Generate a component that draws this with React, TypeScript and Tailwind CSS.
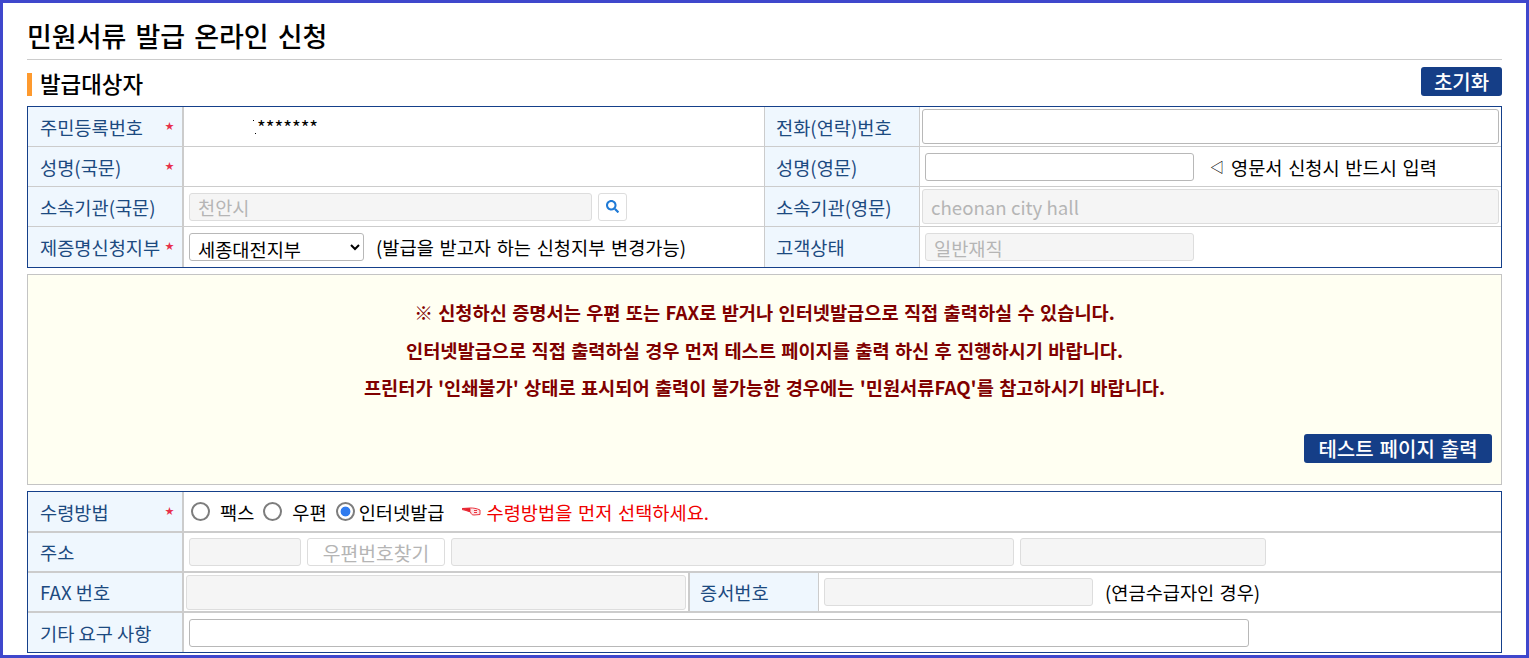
import { ReactNode } from 'react'
import { FaSearch } from 'react-icons/fa'

const fieldBase = 'h-[28px] rounded-[3px] border px-2 text-[18.67px] outline-none'
const disabledField = `${fieldBase} border-[#dddddd] bg-[#f5f5f5] text-[#b5b5b5]`
const enabledField = `${fieldBase} border-[#b8b8b8] bg-white text-black`
const radioClass =
  "m-0 h-[19px] w-[19px] appearance-none rounded-full border-2 border-[#7d7d7d] bg-white checked:bg-[radial-gradient(circle,#2f7bef_0,#2f7bef_42%,white_50%)]"

function Required() {
  return <span className="absolute right-[8px] top-[11px] text-[9px] leading-[16px] text-[#e8304a]">★</span>
}

function Label({ children, required, className }: { children: ReactNode; required?: boolean; className: string }) {
  return (
    <div className={`relative flex shrink-0 items-center bg-[#eff7fe] text-[#1c4a80] ${className}`}>
      <span>{children}</span>
      {required && <Required />}
    </div>
  )
}

function Row({ children, className = 'h-[40px] border-b border-[#cccccc]' }: { children: ReactNode; className?: string }) {
  return <div className={`flex ${className}`}>{children}</div>
}

function ApplicantTable() {
  const left = 'w-[156px] border-r-2 border-[#cccccc] pl-[12px]'
  const right = 'w-[156px] border-x border-[#cccccc] pl-[11px]'
  return (
    <div className="border border-[#15408a] text-[18.67px]">
      <Row>
        <Label required className={left}>주민등록번호</Label>
        <div className="relative w-[580px] pl-[73px] pt-[8px] text-[18.7px] leading-[24px] text-black">
          *******
          <span className="absolute left-[69px] top-[13px] h-px w-px bg-black" />
          <span className="absolute left-[71px] top-[26px] h-px w-px bg-black" />
        </div>
        <Label className={right}>전화(연락)번호</Label>
        <div className="flex flex-1 items-center pl-[2px] pr-[2px]">
          <input className={`${enabledField} h-[35px] w-full`} />
        </div>
      </Row>
      <Row>
        <Label required className={left}>성명(국문)</Label>
        <div className="w-[580px]" />
        <Label className={right}>성명(영문)</Label>
        <div className="flex flex-1 items-center pl-[5px]">
          <input className={`${enabledField} w-[269px]`} />
          <span className="ml-[16px] text-[14px] text-black">◁</span>
          <span className="ml-[7px] text-black [word-spacing:1.5px]">영문서 신청시 반드시 입력</span>
        </div>
      </Row>
      <Row>
        <Label className={left}>소속기관(국문)</Label>
        <div className="flex w-[580px] items-center pl-[5px]">
          <input disabled value="천안시" className={`${disabledField} w-[403px]`} readOnly />
          <button className="ml-[6px] flex h-[28px] w-[29px] items-center justify-center rounded-[3px] border border-[#dddddd] bg-white">
            <FaSearch className="h-[13px] w-[13px] text-[#1f7ad6]" />
          </button>
        </div>
        <Label className={right}>소속기관(영문)</Label>
        <div className="flex flex-1 items-center pl-[2px] pr-[2px]">
          <input disabled value="cheonan city hall" className={`${disabledField} h-[35px] w-full`} readOnly />
        </div>
      </Row>
      <Row className="h-[40px]">
        <Label required className={left}>제증명신청지부</Label>
        <div className="flex w-[580px] items-center pl-[5px]">
          <select className="h-[28px] w-[175px] rounded-[3px] border border-[#b8b8b8] bg-white pl-[4px] text-[18.67px] text-black outline-none">
            <option>세종대전지부</option>
          </select>
          <span className="ml-[12px] text-black [word-spacing:1.5px]">(발급을 받고자 하는 신청지부 변경가능)</span>
        </div>
        <Label className={right}>고객상태</Label>
        <div className="flex flex-1 items-center pl-[5px]">
          <input disabled value="일반재직" className={`${disabledField} w-[269px]`} readOnly />
        </div>
      </Row>
    </div>
  )
}

function Notice() {
  return (
    <div className="mt-[6px] h-[211px] border border-[#c4c4c4] bg-[#fffff2] px-[9px]">
      <div className="flex flex-col items-center pt-[18px] text-[18.67px] font-bold leading-[37.5px] text-[#800000] [word-spacing:1.1px]">
        <p>※ 신청하신 증명서는 우편 또는 FAX로 받거나 인터넷발급으로 직접 출력하실 수 있습니다.</p>
        <p>인터넷발급으로 직접 출력하실 경우 먼저 테스트 페이지를 출력 하신 후 진행하시기 바랍니다.</p>
        <p>프린터가 '인쇄불가' 상태로 표시되어 출력이 불가능한 경우에는 '민원서류FAQ'를 참고하시기 바랍니다.</p>
      </div>
      <div className="mt-[28px] flex justify-end">
        <button className="h-[29px] w-[188px] rounded-[3px] bg-[#153e87] text-[20px] font-medium leading-[29px] text-white [word-spacing:1.5px]">
          테스트 페이지 출력
        </button>
      </div>
    </div>
  )
}

function Radio({ checked, label, gap }: { checked?: boolean; label: string; gap: string }) {
  return (
    <label className="flex items-center">
      <input type="radio" name="receive" defaultChecked={checked} className={radioClass} />
      <span className={`${gap} text-black`}>{label}</span>
    </label>
  )
}

function ReceiveTable() {
  const left = 'w-[156px] border-r-2 border-[#cccccc] pl-[12px]'
  const line = 'border-b-2 border-[#cccccc]'
  return (
    <div className="mt-[6px] border border-[#15408a] text-[18.67px]">
      <Row className={`h-[41px] ${line}`}>
        <Label required className={left}>수령방법</Label>
        <div className="flex flex-1 items-center gap-[9px] pl-[7px]">
          <Radio label="팩스" gap="ml-[10px]" />
          <Radio label="우편" gap="ml-[10px]" />
          <Radio checked label="인터넷발급" gap="ml-[4px]" />
          <span className="ml-[9px] flex items-center text-[#f00000] [word-spacing:1.5px]">
            <svg viewBox="0 0 19 9" className="mr-[5px] h-[9px] w-[19px]" fill="none" stroke="#e8202c" strokeWidth="0.9">
              <path d="M0 1.5 L8 1 C11 0.8 15 1.5 18 3 L18 7.5 L12 8 C10 8 9 7 8.5 5 L4 3.5 L0 2.5 Z" fill="#fde3e5" />
              <path d="M1 1.8 L8 1.6 L8 4.6 Z" fill="#e8202c" />
              <path d="M12 3.5 L15 3.5 M12 5.5 L15 5.5" />
            </svg>
            수령방법을 먼저 선택하세요.
          </span>
        </div>
      </Row>
      <Row className={`h-[40px] ${line}`}>
        <Label className={left}>주소</Label>
        <div className="flex flex-1 items-center pl-[5px]">
          <input disabled className={`${disabledField} w-[112px]`} />
          <button disabled className="ml-[6px] h-[28px] w-[138px] rounded-[3px] border border-[#dddddd] bg-white text-[19.3px] text-[#b5b5b5]">
            우편번호찾기
          </button>
          <input disabled className={`${disabledField} ml-[6px] w-[563px]`} />
          <input disabled className={`${disabledField} ml-[6px] w-[246px]`} />
        </div>
      </Row>
      <Row className={`h-[40px] ${line}`}>
        <Label className={left}>FAX 번호</Label>
        <div className="flex w-[504px] items-center px-[2px]">
          <input disabled className={`${disabledField} h-[35px] w-full`} />
        </div>
        <Label className="w-[131px] border-l-2 border-r border-[#cccccc] pl-[10px]">증서번호</Label>
        <div className="flex flex-1 items-center pl-[5px]">
          <input disabled className={`${disabledField} w-[269px]`} />
          <span className="ml-[12px] text-black [word-spacing:1px]">(연금수급자인 경우)</span>
        </div>
      </Row>
      <Row className="h-[39px]">
        <Label className={left}>기타 요구 사항</Label>
        <div className="flex flex-1 items-center pl-[5px]">
          <input className={`${enabledField} w-[1060px]`} />
        </div>
      </Row>
    </div>
  )
}

export default function App() {
  return (
    <div className="h-[658px] overflow-hidden border-[3px] border-[#3f47cc] bg-white font-['Noto_Sans_CJK_KR','Noto_Sans',sans-serif]">
      <div className="px-[24px] pt-[15px]">
        <h1 className="border-b border-[#cccccc] pb-[6px] text-[27px] font-medium leading-[35px] text-black [word-spacing:3px]">
          민원서류 발급 온라인 신청
        </h1>
        <div className="mt-[7px] flex h-[29px] items-start justify-between">
          <h2 className="mt-[6px] flex items-start text-[22.4px] font-medium leading-[21px] text-black">
            <span className="mr-[8px] h-[23px] w-[5px] bg-[#fe9a2e]" />
            발급대상자
          </h2>
          <button className="h-[29px] w-[81px] rounded-[3px] bg-[#153e87] text-[20px] font-medium leading-[29px] text-white">
            초기화
          </button>
        </div>
        <div className="mt-[10px]">
          <ApplicantTable />
          <Notice />
          <ReceiveTable />
        </div>
      </div>
    </div>
  )
}
